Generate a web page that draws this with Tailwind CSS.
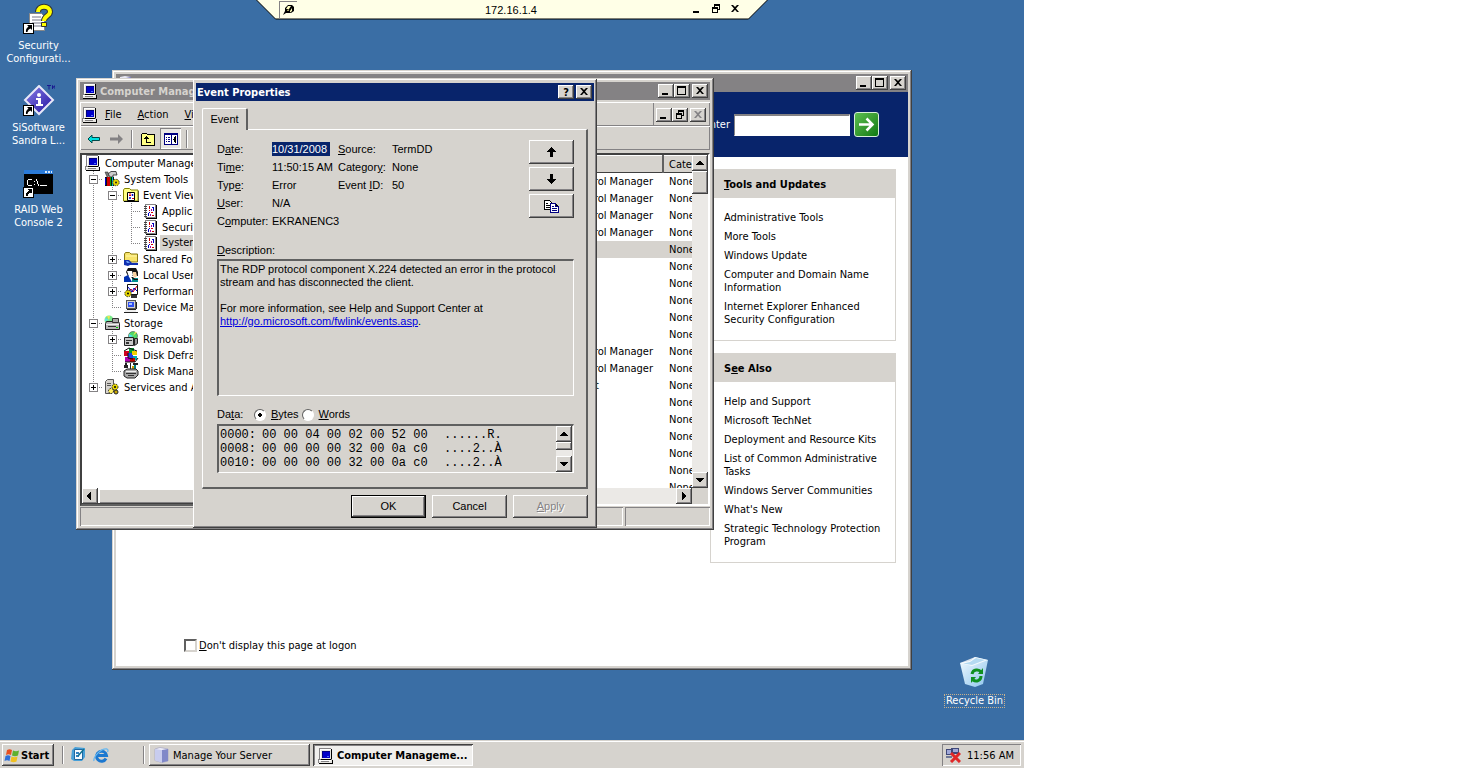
<!DOCTYPE html>
<html lang="en">
<head>
<meta charset="utf-8">
<meta name="viewport" content="width=device-width, initial-scale=1">
<title>172.16.1.4</title>
<script src="https://cdn.jsdelivr.net/npm/@tailwindcss/browser@4"></script>
</head>
<body class="min-h-screen bg-white font-['DejaVu_Sans_Condensed','DejaVu_Sans',sans-serif] text-[11px] leading-[13px] text-black">

<!-- Shared icons -->
<svg class="hidden" aria-hidden="true">
  <symbol id="pc" viewBox="0 0 16 16"><g shape-rendering="crispEdges"><path fill="#848284" d="M1 0h12v1H1zM1 1h1v10H1zM0 11h14v1H0zM0 12h1v3H0z"/><path fill="#e8e6e2" d="M2 1h11v10H2zM1 12h13v3H1z"/><path fill="#fff" d="M2 1h11v1H3v9H2zM1 12h12v1H1z"/><path fill="#000" d="M13 1h1v10h-1zM3 11h10v1H3zM1 15h14v1H1zM14 12h1v3h-1z"/><path fill="#0000c8" d="M4 3h8v7H4z"/><path fill="#000080" d="M4 3h8v1H4zM4 3h1v7H4z"/><path fill="#4a6aff" d="M9 8h2v1H9z"/><path fill="#848284" d="M3 13h8v1H3z"/></g></symbol>
  <symbol id="i-min" viewBox="0 0 12 10"><path d="M2 7h6v2H2z" shape-rendering="crispEdges"/></symbol>
  <symbol id="i-max" viewBox="0 0 12 10"><path fill-rule="evenodd" d="M1 0h9v9H1zM2 2v6h7V2z" shape-rendering="crispEdges"/></symbol>
  <symbol id="i-res" viewBox="0 0 12 10"><path fill-rule="evenodd" d="M4 0h6v6H8v3H2V3h2zM5 2v1h3v2h1V2zM3 5v3h4V5z" shape-rendering="crispEdges"/></symbol>
  <symbol id="i-x" viewBox="0 0 12 10"><path d="M2 1h2l2 2 2-2h2L7 4.500l3 3.500H8L6 5.800 4 8H2l3-3.500z"/></symbol>
  <symbol id="a-up" viewBox="0 0 8 8"><path d="M3 2h2v1h1v1h1v1h1v1H0V5h1V4h1V3h1z" shape-rendering="crispEdges"/></symbol>
  <symbol id="a-dn" viewBox="0 0 8 8"><path d="M0 2h8v1H7v1H6v1H5v1H3V5H2V4H1V3H0z" shape-rendering="crispEdges"/></symbol>
  <symbol id="a-lt" viewBox="0 0 8 8"><path d="M5 0v8H4V7H3V6H2V5H1V3h1V2h1V1h1V0z" shape-rendering="crispEdges"/></symbol>
  <symbol id="a-rt" viewBox="0 0 8 8"><path d="M2 0v8h1V7h1V6h1V5h1V3H5V2H4V1H3V0z" shape-rendering="crispEdges"/></symbol>
  <symbol id="shortcut" viewBox="0 0 11 11"><g shape-rendering="crispEdges"><path fill="#fff" d="M0 0h11v11H0z"/><path fill="none" stroke="#000" d="M.5 .5h10v10H.5z"/></g><path d="M4 2h5v5L7.500 5.500C5.500 6.500 4.500 7.500 4.500 9H3C2.500 7 3.500 5 5.500 3.500z"/></symbol>
  <symbol id="tools" viewBox="0 0 16 16"><path fill="#ccc" stroke="#222" stroke-width=".8" d="M4 3l3-2.500h5l1 3.500H9v2H6z"/><path fill="#777" stroke="#222" stroke-width=".5" d="M1 1h3l1 4-2 1z"/><path fill="#111" d="M1 6h9v9H1z"/><path fill="#d00000" d="M3 6h3v9H3z"/><path fill="#00c0c0" d="M8 6h1v9H8z"/><path fill="#0000d0" d="M1 7h1v7H1z"/><path fill="#00a000" d="M6 6h1v9H6z"/><circle cx="12" cy="11.500" r="3.200" fill="#e8d800" stroke="#333" stroke-dasharray="1.500 1"/><circle cx="12" cy="11.500" r="1" fill="#222"/></symbol>
  <symbol id="evt" viewBox="0 0 16 16"><path fill="#ffff84" stroke="#848200" d="M.5 14V3l1-1.500h5L8 3h7v11z"/><path d="M1 14.500h15V4" stroke="#000" fill="none"/><path fill="#fff" stroke="#000" d="M4.500 5.500h7v8h-7z"/><path stroke="#d00" d="M6 7h2M6 8.500h2"/><path stroke="#00c" stroke-width="1.500" d="M9.500 7v2M7 10v2"/><path stroke="#c00" d="M9 11.500h2"/></symbol>
  <symbol id="log" viewBox="0 0 16 16"><g shape-rendering="crispEdges"><path fill="#fff" stroke="#848284" d="M3.500 1.500h10v13h-10z"/><path stroke="#000" d="M14.500 2v13M4 15.500h11"/><path d="M2 3h3v1H2zM2 5h3v1H2zM2 7h3v1H2zM2 9h3v1H2zM2 11h3v1H2zM2 13h3v1H2z" fill="#444"/><path fill="#d00000" d="M7 3h1v3H7zM7 7h1v1H7zM9 9h2v1H9zM10 12h2v1h-2z"/><path fill="#0000c0" d="M10 4h2v1h-2zM11 5h1v3h-1zM6 10h1v3H6zM7 9h1v1H7z"/><path fill="#a000a0" d="M9 6h1v2H9zM8 11h1v2H8z"/></g></symbol>
  <symbol id="share" viewBox="0 0 16 16"><path fill="#f7e36b" stroke="#8a7a10" d="M1.500 11V3l1-1.500h4L8 3h6.500v8z"/><path fill="#fff6a8" d="M3 4.500h11v1H3z"/><path fill="#1030b0" d="M1 9h5l3 3h6v2H7l-2 1-4-1z"/><path fill="#6a9cf0" d="M3 10h2l2 2H4z"/></symbol>
  <symbol id="users" viewBox="0 0 16 16"><path fill="#111" d="M5 1h8l2 4v4H5L3 5z"/><path fill="#fff" d="M4 4h5l1 4-2 2H6z"/><path fill="#0030b0" d="M1 10l4-2 4 7H1z"/><path fill="#f7d0a0" d="M10 5h3l1 4-2 2-2-2z"/><path fill="#009090" d="M9 11h6v4H9z"/><path fill="#111" d="M8 10h2l2 2h3v1h-4z"/></symbol>
  <symbol id="perf" viewBox="0 0 16 16"><path fill="#fff" stroke="#111" d="M4.500 1.500h10v10h-10z"/><path fill="none" stroke="#d00" d="M5 9l3-3 2 3 4-6"/><path fill="none" stroke="#00c" d="M5 4l4 5 2-4 3 3"/><circle cx="5" cy="10.500" r="3.200" fill="#e8d800" stroke="#333" stroke-dasharray="1.500 1"/><circle cx="5" cy="10.500" r="1"/><path fill="#333" d="M8 12h6v3H8z"/></symbol>
  <symbol id="dev" viewBox="0 0 16 16"><g shape-rendering="crispEdges"><path fill="#d6d3ce" stroke="#555" d="M3.500 1.500h9v8h-9z"/><path fill="#3050f0" d="M5 3h6v5H5z"/><path fill="#a8c0ff" d="M6 4h3v2H6z"/><path fill="#eee" d="M2 11h11v2H2z"/><path fill="#222" d="M1 13h14v1H1zM13 3h1v7h-1zM4 10h9v1H4z"/></g></symbol>
  <symbol id="stor" viewBox="0 0 16 16"><circle cx="5" cy="5" r="4.500" fill="#78e888"/><path fill="#f0e850" d="M5 5L3 1h3z"/><path fill="#60e0f0" d="M5 5L1 3v3z"/><path fill="#b8b8b8" stroke="#222" d="M1.500 8.500l1-2h12l1 2v6h-14z"/><path fill="#eee" d="M2 9h13v1H2z"/><path fill="#aaa" stroke="#333" d="M8.500 3.500h6v4h-6z"/><path fill="#333" d="M4 11h8v1H4z"/><path fill="#0c0" d="M12 12h2v1h-2z"/></symbol>
  <symbol id="rem" viewBox="0 0 16 16"><circle cx="10" cy="5" r="4.500" fill="#50d868" stroke="#333" stroke-width=".5"/><path fill="#f0e850" d="M10 5l2-4h2z"/><path fill="#50e0e8" d="M10 5L6 3v4z"/><path fill="#c8c8c8" stroke="#222" d="M1.500 6.500h9v8h-9z"/><path fill="#333" d="M3 9h6v1H3zM3 11h3v2H3z"/><path fill="#999" stroke="#222" d="M11.500 7.500h3v5l-3 2z"/></symbol>
  <symbol id="frag" viewBox="0 0 16 16"><path fill="#d00020" d="M1 4h5v5H1z"/><path fill="#00a030" d="M6 1h5v5H6z"/><path fill="#2040e0" d="M5 6h5v5H5z"/><path fill="#f0d000" d="M9 4h5v4H9z"/><path fill="#b000b0" d="M2 10h5v5H2z"/><path fill="#00b0b0" d="M10 9h4v4h-4z"/><path fill="#c00000" d="M7 11h5v4H7z"/><path fill="none" stroke="#111" d="M1 4l5-3M6 1l8 3M2 15h10l3-4M5 6v5l5 1"/></symbol>
  <symbol id="dmgr" viewBox="0 0 16 16"><path fill="#222" d="M2 0h2v2h1v3H1V2h1zM7 0h1v6H7zM10 0h5v2h-5z"/><path stroke="#008080" stroke-width="2" d="M12 2v5"/><path fill="#d0a000" d="M9 3h2v3H9z"/><path fill="#a8a8a8" stroke="#222" d="M1 8l3-2h9l2 2v4l-3 3H4l-3-2z"/><path fill="#eee" d="M3 8h10v1H3z"/><path fill="#333" d="M3 10h10v1H3zM5 12h6v1H5z"/></symbol>
  <symbol id="svc" viewBox="0 0 16 16"><path fill="#d6d3ce" stroke="#555" d="M1.500 2.500l2-2h6v12l-2 2h-6z"/><path stroke="#555" d="M3 4.500h4M3 6.500h4"/><circle cx="11" cy="8" r="3" fill="#e8d800" stroke="#222" stroke-dasharray="1.500 1"/><circle cx="7" cy="12" r="2.500" fill="#fff060" stroke="#222" stroke-dasharray="1.500 1"/><circle cx="12" cy="13" r="2" fill="#c8a800" stroke="#222"/><circle cx="11" cy="8" r="1"/></symbol>
</svg>

<main class="relative flex h-screen min-h-[768px] w-full max-w-[1024px] flex-col overflow-hidden bg-[#3a6ea5]">

  <!-- Desktop shortcuts -->
  <nav class="flex w-[77px] flex-1 flex-col pt-[3px] text-center text-white" aria-label="Desktop">
    <a href="#" class="flex h-[82px] flex-col items-center gap-1">
      <svg class="size-8" viewBox="0 0 32 32"><path fill="#fff" stroke="#888" d="M6.500 10.500h12l3 3v14h-15z"/><path stroke="#778" d="M9 14h9M9 17h10M9 20h10M9 23h10"/><path fill="none" stroke="#333" stroke-width="6" d="M15 9c0-7 12-7 12 0 0 4-6 4-6 9"/><path fill="none" stroke="#ffff00" stroke-width="4" d="M15 9c0-7 12-7 12 0 0 4-6 4-6 9"/><path fill="#ffff00" stroke="#333" d="M18.500 19.500h5v4h-5z"/><use href="#shortcut" x="0" y="20" width="11" height="11"/></svg>
      <span>Security<br>Configurati...</span>
    </a>
    <a href="#" class="flex h-[82px] flex-col items-center gap-1">
      <svg class="size-8" viewBox="0 0 32 32"><defs><linearGradient id="dia" x1="0" y1="0" x2="1" y2="1"><stop offset="0" stop-color="#8a80e8"/><stop offset="1" stop-color="#2010a0"/></linearGradient></defs><path fill="url(#dia)" stroke="#e8e8f8" stroke-width="2" d="M16 1l14 14-14 14L2 15z"/><circle cx="16" cy="10" r="2" fill="#fff"/><path fill="#fff" d="M13 13h5v6h2v2h-7v-2h2v-4h-2z"/><path fill="none" stroke="#1a1a90" d="M24 .5h4M26 .5v4M29.500 4V.5l1.200 2L32 .5V4"/><use href="#shortcut" x="0" y="20" width="11" height="11"/></svg>
      <span>SiSoftware<br>Sandra L...</span>
    </a>
    <a href="#" class="flex h-[82px] flex-col items-center gap-1">
      <svg class="size-8" viewBox="0 0 32 32" shape-rendering="crispEdges"><path fill="#000" d="M1 3h29v24H1z"/><path fill="#2a7ad8" d="M1 3h29v4H1z"/><path fill="#d8e8f8" d="M22 4h2v2h-2zM25 4h2v2h-2zM28 4h1v2h-1z"/><path fill="#fff" d="M5 12h4v1H5zM4 13h1v5H4zM5 18h4v1H5zM11 14h1v1h-1zM11 17h1v1h-1zM13 12h1v2h-1zM14 14h1v3h-1zM15 17h1v2h-1zM17 18h7v1h-7z"/><use href="#shortcut" x="0" y="20" width="11" height="11"/></svg>
      <span>RAID Web<br>Console 2</span>
    </a>
  </nav>
  <a href="#" class="absolute right-[19px] bottom-[60px] flex flex-col items-center gap-[6px] text-white">
    <svg class="size-8" viewBox="0 0 32 32"><defs><linearGradient id="bin" x1="0" y1="0" x2="1" y2="1"><stop offset="0" stop-color="#f4fbff"/><stop offset="1" stop-color="#8cc4ec"/></linearGradient></defs><path fill="url(#bin)" d="M2 7l10-2 5-4 13 3-5 24-8 3-10-3z"/><path fill="#fff" opacity=".8" d="M2 7l12 3 16-6-13-3z"/><path fill="#b4daf2" d="M5 7.500l9 1.500 13-5-9-2-6 4z"/><path fill="none" stroke="#109020" stroke-width="3" d="M14 18c1-5 7-5 9-2M23 20c0 5-5 6-8 4"/><path fill="#109020" d="M20 18h5v-6zM18 21h-5v6z"/></svg>
    <span class="border border-dotted border-[#c8b08c] px-px leading-[12px]">Recycle Bin</span>
  </a>

  <!-- Manage Your Server -->
  <section aria-label="Manage Your Server" class="absolute top-[70px] left-[112px] flex h-[600px] w-[800px] flex-col bg-[#d6d3ce] p-1 shadow-[inset_-1px_-1px_0_#404040,inset_1px_1px_0_#d6d3ce,inset_-2px_-2px_0_#848284,inset_2px_2px_0_#fff]">
    <header class="flex h-[18px] shrink-0 items-center justify-end bg-[#848284] px-[2px]">
      <svg class="mr-auto size-4" viewBox="0 0 16 16"><path fill="#e8e8f4" d="M2 2l5-1 6 1v12l-6 1-5-2z"/><path fill="#7070c0" d="M8 3l5-1v12l-5 1z"/></svg>
      <button aria-label="Minimize" class="grid h-[14px] w-4 place-items-center bg-[#d6d3ce] shadow-[inset_-1px_-1px_0_#404040,inset_1px_1px_0_#fff,inset_-2px_-2px_0_#848284]"><svg class="h-[10px] w-3"><use href="#i-min"/></svg></button>
      <button aria-label="Maximize" class="mr-[2px] grid h-[14px] w-4 place-items-center bg-[#d6d3ce] shadow-[inset_-1px_-1px_0_#404040,inset_1px_1px_0_#fff,inset_-2px_-2px_0_#848284]"><svg class="h-[10px] w-3"><use href="#i-max"/></svg></button>
      <button aria-label="Close" class="grid h-[14px] w-4 place-items-center bg-[#d6d3ce] shadow-[inset_-1px_-1px_0_#404040,inset_1px_1px_0_#fff,inset_-2px_-2px_0_#848284]"><svg class="h-[10px] w-3"><use href="#i-x"/></svg></button>
    </header>
    <form class="flex h-[65px] shrink-0 items-center justify-end gap-1 bg-[#08246b] pr-[29px] text-white">
      <label for="search">Search Help and Support Center</label>
      <input id="search" type="text" class="h-[22px] w-[116px] border border-t-2 border-[#848284] border-r-white border-b-white bg-white px-1 text-black">
      <button type="button" aria-label="Go" class="grid size-[25px] place-items-center rounded-[3px] border border-[#d8f0d8] bg-linear-to-br from-[#5cc050] to-[#0a7a10]"><svg class="size-[17px]" viewBox="0 0 17 17"><path fill="none" stroke="#fff" stroke-width="2.500" d="M1 8.500h13M8.500 2.500l6 6-6 6"/></svg></button>
    </form>
    <div class="flex flex-1 flex-col bg-white">
      <div class="flex flex-1 items-start justify-end pt-3 pr-3">
        <aside class="flex w-[186px] flex-col gap-3">
          <section class="border border-[#d6d3ce]">
            <h2 class="bg-[#d6d3ce] px-[13px] pt-2 pb-[7px] font-bold"><u>T</u>ools and Updates</h2>
            <ul class="flex flex-col gap-[6px] px-[13px] pt-[13px] pb-[14px]">
              <li><a href="#">Administrative Tools</a></li>
              <li><a href="#">More Tools</a></li>
              <li><a href="#">Windows Update</a></li>
              <li><a href="#">Computer and Domain Name<br>Information</a></li>
              <li><a href="#">Internet Explorer Enhanced<br>Security Configuration</a></li>
            </ul>
          </section>
          <section class="border border-[#d6d3ce]">
            <h2 class="bg-[#d6d3ce] px-[13px] pt-2 pb-[7px] font-bold">S<u>e</u>e Also</h2>
            <ul class="flex flex-col gap-[6px] px-[13px] pt-[13px] pb-[14px]">
              <li><a href="#">Help and Support</a></li>
              <li><a href="#">Microsoft TechNet</a></li>
              <li><a href="#">Deployment and Resource Kits</a></li>
              <li><a href="#">List of Common Administrative<br>Tasks</a></li>
              <li><a href="#">Windows Server Communities</a></li>
              <li><a href="#">What's New</a></li>
              <li><a href="#">Strategic Technology Protection<br>Program</a></li>
            </ul>
          </section>
        </aside>
      </div>
      <label class="flex items-center gap-[2px] pb-[14px] pl-[68px]"><input type="checkbox" class="size-[13px] appearance-none border-2 border-[#606060] border-r-[#d6d3ce] border-b-[#d6d3ce] bg-white"><span><u>D</u>on't display this page at logon</span></label>
    </div>
  </section>

  <!-- Computer Management -->
  <section aria-label="Computer Management" class="absolute top-[78px] left-[76px] flex h-[452px] w-[638px] flex-col bg-[#d6d3ce] p-1 shadow-[inset_-1px_-1px_0_#404040,inset_1px_1px_0_#d6d3ce,inset_-2px_-2px_0_#848284,inset_2px_2px_0_#fff]">
    <header class="flex h-[18px] shrink-0 items-center bg-[#848284] px-[2px]">
      <svg class="size-4"><use href="#pc"/></svg>
      <h1 class="ml-[2px] flex-1 font-bold text-[#d6d3ce]">Computer Management</h1>
      <button aria-label="Minimize" class="grid h-[14px] w-4 place-items-center bg-[#d6d3ce] shadow-[inset_-1px_-1px_0_#404040,inset_1px_1px_0_#fff,inset_-2px_-2px_0_#848284]"><svg class="h-[10px] w-3"><use href="#i-min"/></svg></button>
      <button aria-label="Maximize" class="mr-[2px] grid h-[14px] w-4 place-items-center bg-[#d6d3ce] shadow-[inset_-1px_-1px_0_#404040,inset_1px_1px_0_#fff,inset_-2px_-2px_0_#848284]"><svg class="h-[10px] w-3"><use href="#i-max"/></svg></button>
      <button aria-label="Close" class="grid h-[14px] w-4 place-items-center bg-[#d6d3ce] shadow-[inset_-1px_-1px_0_#404040,inset_1px_1px_0_#fff,inset_-2px_-2px_0_#848284]"><svg class="h-[10px] w-3"><use href="#i-x"/></svg></button>
    </header>
    <div class="mt-[2px] flex h-6 shrink-0 items-center border-t border-l border-white shadow-[inset_-1px_-1px_0_#848284]">
      <svg class="ml-px size-4"><use href="#pc"/></svg>
      <div class="flex flex-1 gap-4 pl-[7px]"><button><u>F</u>ile</button><button><u>A</u>ction</button><button><u>V</u>iew</button></div>
      <div class="flex h-full items-center border-l border-[#848284] pr-1 pl-[2px]">
        <button aria-label="Minimize document" class="grid h-[14px] w-4 place-items-center bg-[#d6d3ce] shadow-[inset_-1px_-1px_0_#404040,inset_1px_1px_0_#fff,inset_-2px_-2px_0_#848284]"><svg class="h-[10px] w-3"><use href="#i-min"/></svg></button>
        <button aria-label="Restore document" class="mr-[2px] grid h-[14px] w-4 place-items-center bg-[#d6d3ce] shadow-[inset_-1px_-1px_0_#404040,inset_1px_1px_0_#fff,inset_-2px_-2px_0_#848284]"><svg class="h-[10px] w-3"><use href="#i-res"/></svg></button>
        <button disabled aria-label="Close document" class="grid h-[14px] w-4 place-items-center bg-[#d6d3ce] fill-[#848284] shadow-[inset_-1px_-1px_0_#404040,inset_1px_1px_0_#fff,inset_-2px_-2px_0_#848284]"><svg class="h-[10px] w-3"><use href="#i-x"/></svg></button>
      </div>
    </div>
    <div class="flex h-6 shrink-0 items-center border-t border-l border-white pl-[6px] shadow-[inset_-1px_-1px_0_#848284]">
      <button aria-label="Back"><svg class="h-[10px] w-[13px]" viewBox="0 0 13 10"><path fill="#00e0e0" stroke="#004a4a" d="M1 5l4-4v2.500h7.500v3H5V9z"/></svg></button>
      <button aria-label="Forward" class="ml-[10px]"><svg class="h-[10px] w-[13px]" viewBox="0 0 13 10"><path fill="#848284" d="M13 5L8 0v3.500H0v3h8V10z"/></svg></button>
      <span class="ml-2 h-[18px] w-[2px] border-l border-[#848284] bg-white"></span>
      <button aria-label="Up one level" class="ml-[7px]"><svg class="h-[14px] w-4" viewBox="0 0 16 14" shape-rendering="crispEdges"><path fill="#ffff84" stroke="#000" d="M1.500 13.500v-11l1-1h4l1 1h7v11z"/><path d="M6 4h1v1h1v1h1v1H7v3h4v1H6V7H4V6h1V5h1z"/></svg></button>
      <button aria-label="Show tree" class="ml-1 grid size-[21px] place-items-center bg-[#e8e6e2] shadow-[inset_1px_1px_0_#848284,inset_-1px_-1px_0_#fff]"><svg class="h-3 w-[14px]" viewBox="0 0 14 12" shape-rendering="crispEdges"><path fill="#fff" stroke="#000080" d="M.5 .5h13v11H.5z"/><path fill="#000080" d="M0 0h14v2H0zM7 2h1v9H7zM2 4h1v1H2zM4 4h2v1H4zM2 6h1v1H2zM4 6h2v1H4zM2 8h1v1H2zM4 8h2v1H4z"/><path d="M12 3v7h-1V9h-1V7H9V6h1V4h1V3z"/></svg></button>
      <span class="ml-[5px] h-[18px] w-[2px] border-l border-[#848284] bg-white"></span>
    </div>
    <div class="mt-[3px] flex min-h-0 flex-1 gap-1">
      <div class="flex w-[220px] shrink-0 flex-col overflow-hidden border-2 border-[#404040] border-r-white border-b-[#606060] bg-white">
        <ul id="tree" class="min-h-0 flex-1 overflow-hidden whitespace-nowrap pl-[2px]"></ul>
        <div class="flex h-4 shrink-0 bg-[#e9e7e3]">
          <button aria-label="Scroll left" class="grid size-4 place-items-center bg-[#d6d3ce] shadow-[inset_-1px_-1px_0_#404040,inset_1px_1px_0_#fff,inset_-2px_-2px_0_#848284]"><svg class="size-2"><use href="#a-lt"/></svg></button>
          <span class="w-[150px] bg-[#d6d3ce] shadow-[inset_-1px_-1px_0_#404040,inset_2px_2px_0_#fff,inset_-2px_-2px_0_#848284]"></span>
        </div>
      </div>
      <div class="flex min-w-0 flex-1 border-2 border-[#404040] border-r-white border-b-white bg-white">
        <div class="flex min-w-0 flex-1 flex-col">
          <div class="min-h-0 flex-1 overflow-hidden">
            <table class="w-full table-fixed border-collapse whitespace-nowrap">
              <thead><tr class="h-[18px] bg-[#d6d3ce] text-left shadow-[inset_0_-1px_0_#404040,inset_0_1px_0_#fff]"><th class="p-0"></th><th class="w-[29px] overflow-hidden border-l-2 border-[#606060] p-0 pl-[5px] font-normal">Category</th></tr></thead>
              <tbody id="events"></tbody>
            </table>
          </div>
          <div class="flex h-4 shrink-0 justify-end bg-[#ebe9e6]">
            <button aria-label="Scroll right" class="grid size-4 place-items-center bg-[#d6d3ce] shadow-[inset_-1px_-1px_0_#404040,inset_1px_1px_0_#fff,inset_-2px_-2px_0_#848284]"><svg class="size-2"><use href="#a-rt"/></svg></button>
          </div>
        </div>
        <div class="flex w-4 flex-col bg-[#ebe9e6]">
          <button aria-label="Scroll up" class="grid size-4 place-items-center bg-[#d6d3ce] shadow-[inset_-1px_-1px_0_#404040,inset_1px_1px_0_#fff,inset_-2px_-2px_0_#848284]"><svg class="size-2"><use href="#a-up"/></svg></button>
          <span class="mb-auto h-[23px] bg-[#d6d3ce] shadow-[inset_-1px_-1px_0_#404040,inset_1px_1px_0_#fff,inset_-2px_-2px_0_#848284]"></span>
          <button aria-label="Scroll down" class="grid size-4 place-items-center bg-[#d6d3ce] shadow-[inset_-1px_-1px_0_#404040,inset_1px_1px_0_#fff,inset_-2px_-2px_0_#848284]"><svg class="size-2"><use href="#a-dn"/></svg></button>
          <span class="h-4 bg-[#d6d3ce]"></span>
        </div>
      </div>
    </div>
    <footer class="mt-px flex h-[19px] shrink-0 gap-[2px]">
      <span class="flex-1 shadow-[inset_1px_1px_0_#848284,inset_-1px_-1px_0_#fff]"></span>
      <span class="w-[85px] shadow-[inset_1px_1px_0_#848284,inset_-1px_-1px_0_#fff]"></span>
    </footer>
  </section>

  <!-- Event Properties -->
  <section role="dialog" aria-label="Event Properties" class="absolute top-[79px] left-[193px] flex h-[449px] w-[404px] flex-col bg-[#d6d3ce] p-[3px] pt-1 font-['Liberation_Sans',sans-serif] shadow-[inset_-1px_-1px_0_#404040,inset_1px_1px_0_#fff,inset_-2px_-2px_0_#848284]">
    <header class="flex h-[18px] shrink-0 items-center gap-[2px] bg-[#08246b] pr-[2px] pl-px font-['DejaVu_Sans_Condensed','DejaVu_Sans',sans-serif]">
      <h1 class="flex-1 font-bold text-white">Event Properties</h1>
      <button aria-label="Help" class="grid h-[14px] w-4 place-items-center bg-[#d6d3ce] font-bold shadow-[inset_-1px_-1px_0_#404040,inset_1px_1px_0_#fff,inset_-2px_-2px_0_#848284]">?</button>
      <button aria-label="Close" class="grid h-[14px] w-4 place-items-center bg-[#d6d3ce] shadow-[inset_-1px_-1px_0_#404040,inset_1px_1px_0_#fff,inset_-2px_-2px_0_#848284]"><svg class="h-[10px] w-3"><use href="#i-x"/></svg></button>
    </header>
    <div class="flex flex-1 flex-col px-[6px] pt-[7px] pb-[7px]">
      <div role="tablist" class="z-10 -mb-px flex"><button role="tab" class="h-[22px] w-[46px] rounded-t-[2px] border-t border-r-2 border-l border-[#606060] border-t-white border-l-white bg-[#d6d3ce]">Event</button></div>
      <div class="flex flex-1 flex-col border border-r-2 border-b-2 border-[#606060] border-t-white border-l-white pt-[10px] pr-3 pl-[14px]">
        <div class="flex justify-between">
          <dl class="grid grid-cols-[55px_66px_54px_60px] leading-[18px] whitespace-nowrap">
            <dt>D<u>a</u>te:</dt><dd><span class="bg-[#08246b] py-px pr-[3px] text-white">10/31/2008</span></dd><dt><u>S</u>ource:</dt><dd>TermDD</dd>
            <dt>Ti<u>m</u>e:</dt><dd>11:50:15 AM</dd><dt>Categor<u>y</u>:</dt><dd>None</dd>
            <dt>Typ<u>e</u>:</dt><dd>Error</dd><dt>Event <u>I</u>D:</dt><dd>50</dd>
            <dt><u>U</u>ser:</dt><dd class="col-span-3">N/A</dd>
            <dt>C<u>o</u>mputer:</dt><dd class="col-span-3">EKRANENC3</dd>
          </dl>
          <div class="flex flex-col gap-[3px]">
            <button aria-label="Previous event" class="grid h-6 w-[45px] place-items-center shadow-[inset_-1px_-1px_0_#404040,inset_1px_1px_0_#fff,inset_-2px_-2px_0_#848284]"><svg class="h-[10px] w-[9px]" viewBox="0 0 9 10" shape-rendering="crispEdges"><path d="M4 0h1v1h1v1h1v1h1v1h1v1H6v5H3V5H0V4h1V3h1V2h1V1h1z"/></svg></button>
            <button aria-label="Next event" class="grid h-6 w-[45px] place-items-center shadow-[inset_-1px_-1px_0_#404040,inset_1px_1px_0_#fff,inset_-2px_-2px_0_#848284]"><svg class="h-[10px] w-[9px]" viewBox="0 0 9 10" shape-rendering="crispEdges"><path d="M4 10h1V9h1V8h1V7h1V6h1V5H6V0H3v5H0v1h1v1h1v1h1v1h1z"/></svg></button>
            <button aria-label="Copy" class="grid h-6 w-[45px] place-items-center shadow-[inset_-1px_-1px_0_#404040,inset_1px_1px_0_#fff,inset_-2px_-2px_0_#848284]"><svg class="h-[13px] w-4" viewBox="0 0 16 13" shape-rendering="crispEdges"><path fill="#fff" stroke="#000" d="M.5 .5h5l2 2v7h-7z"/><path stroke="#000" d="M2 3.500h2M2 5.500h4M2 7.500h4"/><path fill="#fff" stroke="#000080" d="M6.500 3.500h5l3 3v6h-8z"/><path stroke="#000080" d="M11.500 3v3.500H15M8 6.500h2M8 8.500h5M8 10.500h5"/></svg></button>
          </div>
        </div>
        <h2 class="mt-[14px] mb-[2px]"><u>D</u>escription:</h2>
        <div class="h-[137px] border border-t-2 border-l-2 border-[#606060] border-r-white border-b-white pt-[2px] pl-px">
          <p>The RDP protocol component X.224 detected an error in the protocol<br>stream and has disconnected the client.</p>
          <p class="mt-[13px]">For more information, see Help and Support Center at<br><a href="http://go.microsoft.com/fwlink/events.asp" class="text-[#0000e0] underline">http://go.microsoft.com/fwlink/events.asp</a>.</p>
        </div>
        <fieldset class="mt-[12px] mb-[3px] flex items-center">
          <legend class="float-left w-[37px]">Da<u>t</u>a:</legend>
          <label class="flex items-center gap-[5px]"><input type="radio" name="fmt" checked class="size-3 appearance-none rounded-full border border-[#606060] border-r-white border-b-white bg-white checked:bg-[radial-gradient(#000_2px,#fff_2px)]"><span><u>B</u>ytes</span></label>
          <label class="ml-[3px] flex items-center gap-[5px]"><input type="radio" name="fmt" class="size-3 appearance-none rounded-full border border-[#606060] border-r-white border-b-white bg-white checked:bg-[radial-gradient(#000_2px,#fff_2px)]"><span><u>W</u>ords</span></label>
        </fieldset>
        <div class="flex h-[49px] justify-between border border-t-2 border-l-2 border-[#606060] border-r-white border-b-white pr-px">
          <table class="ml-px h-[42px] w-[290px] table-fixed border-collapse self-center font-['Liberation_Mono',monospace] text-[12px] leading-[14px] whitespace-nowrap">
            <tbody>
              <tr><td class="w-[42px] p-0">0000:</td><td class="w-[182px] p-0">00 00 04 00 02 00 52 00</td><td class="p-0">......R.</td></tr>
              <tr><td class="p-0">0008:</td><td class="p-0">00 00 00 00 32 00 0a c0</td><td class="p-0">....2..À</td></tr>
              <tr><td class="p-0">0010:</td><td class="p-0">00 00 00 00 32 00 0a c0</td><td class="p-0">....2..À</td></tr>
            </tbody>
          </table>
          <div class="flex w-4 flex-col bg-[#ebe9e6]">
            <button aria-label="Scroll data up" class="grid size-4 place-items-center bg-[#d6d3ce] shadow-[inset_-1px_-1px_0_#404040,inset_1px_1px_0_#fff,inset_-2px_-2px_0_#848284]"><svg class="size-2"><use href="#a-up"/></svg></button>
            <span class="mb-auto h-2 bg-[#d6d3ce] shadow-[inset_-1px_-1px_0_#404040,inset_1px_1px_0_#fff,inset_-2px_-2px_0_#848284]"></span>
            <button aria-label="Scroll data down" class="grid size-4 place-items-center bg-[#d6d3ce] shadow-[inset_-1px_-1px_0_#404040,inset_1px_1px_0_#fff,inset_-2px_-2px_0_#848284]"><svg class="size-2"><use href="#a-dn"/></svg></button>
          </div>
        </div>
      </div>
      <div class="mt-[6px] flex justify-end gap-[6px]">
        <button class="h-[23px] w-[75px] border border-black shadow-[inset_-1px_-1px_0_#404040,inset_1px_1px_0_#fff,inset_-2px_-2px_0_#848284]">OK</button>
        <button class="h-[23px] w-[75px] shadow-[inset_-1px_-1px_0_#404040,inset_1px_1px_0_#fff,inset_-2px_-2px_0_#848284]">Cancel</button>
        <button disabled class="h-[23px] w-[75px] text-[#848284] shadow-[inset_-1px_-1px_0_#404040,inset_1px_1px_0_#fff,inset_-2px_-2px_0_#848284] [text-shadow:1px_1px_0_#fff]"><u>A</u>pply</button>
      </div>
    </div>
  </section>

  <!-- Remote connection bar -->
  <div class="absolute top-0 left-1/2 h-5 w-[512px] -translate-x-1/2">
    <svg class="absolute inset-0 h-5 w-full" viewBox="0 0 512 20"><path fill="#ffffe7" stroke="#000" d="M0 -.5L19.500 19h473L512 -.5z"/></svg>
    <div class="relative flex h-[18px] items-center pr-[27px] pl-[23px] font-['Liberation_Sans',sans-serif]">
      <button aria-label="Pin" class="grid h-[17px] w-[18px] place-items-center border-t border-l border-[#848284]"><svg class="size-[11px]" viewBox="0 0 11 11"><path d="M0 11l2-4V4l3-3h4l2 2v4L8 9H3z"/><path fill="#ffffc0" d="M3 5l2-3h3L6 5zM7 7l2-3v3L7 8.500z"/><path fill="#a0a060" d="M4 6l2-1v2H4z"/></svg></button>
      <span class="flex-1 pt-[2px] pl-[34px] text-center">172.16.1.4</span>
      <div class="flex gap-[7px]">
        <button aria-label="Minimize session"><svg class="h-[10px] w-3"><use href="#i-min"/></svg></button>
        <button aria-label="Restore session"><svg class="h-[10px] w-3"><use href="#i-res"/></svg></button>
        <button aria-label="Close session"><svg class="h-[10px] w-3"><use href="#i-x"/></svg></button>
      </div>
    </div>
  </div>

  <!-- Taskbar -->
  <footer class="flex h-7 shrink-0 items-center border-t border-[#d6d3ce] bg-[#d6d3ce] pt-px pr-[3px] pl-[2px] shadow-[inset_0_1px_0_#fff]">
    <button class="flex h-[22px] w-[52px] items-center gap-px pl-[2px] font-bold shadow-[inset_-1px_-1px_0_#404040,inset_1px_1px_0_#fff,inset_-2px_-2px_0_#848284]"><svg class="h-[15px] w-4 shrink-0" viewBox="0 0 16 15"><path fill="#e85020" d="M3 2c2-1 3-1 5 0L7 7C5 6 4 6 2 7z"/><path fill="#60b030" d="M9 2.500c2 1 4 1 6 0L14 7.500c-2 1-4 1-6 0z"/><path fill="#3070d8" d="M1.500 8c2-1 3-1 5 0l-1 5c-2-1-3-1-5 0z"/><path fill="#f0c020" d="M7.500 8.500c2 1 4 1 6 0l-1 5c-2 1-4 1-6 0z"/></svg>Start</button>
    <span class="ml-2 h-[18px] w-[2px] border-l border-[#848284] bg-white"></span>
    <button aria-label="Show Desktop" class="ml-[6px]"><svg class="size-4" viewBox="0 0 16 16"><path fill="#48a0d8" d="M2 3l3-3 10 1v9l-3 4H4l-3-2z"/><path fill="#f4faff" stroke="#2068a0" d="M4.500 2.500h8v10h-8z"/><path fill="#3080c0" d="M6 5h3v2H6zM6 8h3v2H6z"/><path stroke="#107090" stroke-width="1.500" d="M8 9l6-7"/></svg></button>
    <button aria-label="Internet Explorer" class="ml-[7px]"><svg class="size-4" viewBox="0 0 16 16"><path fill="none" stroke="#1c78d0" stroke-width="3" d="M13 11.500a5 5 0 1 1 .5-3H5"/><path fill="none" stroke="#68b8f0" stroke-width="1.300" d="M1 14c-1-4 7-13 13-12 1.500 .5 1 2 .5 3"/></svg></button>
    <span class="ml-[34px] h-[18px] w-[2px] border-l border-[#848284] bg-white"></span>
    <button class="ml-[4px] flex h-[22px] w-[161px] items-center gap-[3px] pl-[5px] shadow-[inset_-1px_-1px_0_#404040,inset_1px_1px_0_#fff,inset_-2px_-2px_0_#848284]"><svg class="size-4" viewBox="0 0 16 16"><path fill="#f0f0fa" stroke="#9898b8" stroke-width=".6" d="M1 2l5-1.500 8 1.500v12l-6 1.500-7-2z"/><path fill="#8088c8" d="M8 3l6-1v12l-6 1.500z"/><path fill="#c8ccee" d="M1 2l7 1v12.500l-7-2z"/></svg>Manage Your Server</button>
    <button aria-pressed="true" class="ml-[3px] flex h-[22px] w-[160px] items-center gap-[3px] bg-[#f0efed] pt-px pl-[5px] font-bold shadow-[inset_1px_1px_0_#404040,inset_-1px_-1px_0_#fff,inset_2px_2px_0_#848284]"><svg class="size-4 shrink-0"><use href="#pc"/></svg>Computer Manageme...</button>
    <div class="ml-auto flex h-[22px] items-center gap-[6px] pr-[7px] pl-[3px] shadow-[inset_1px_1px_0_#848284,inset_-1px_-1px_0_#fff]"><svg class="size-4" viewBox="0 0 16 16"><path fill="#404878" d="M1 2h7v6H1zM6 1h8v6H6z"/><path fill="#a0a8d8" d="M2 3h4v4H2zM8 2h5v3H8z"/><path fill="#707898" d="M1 9h6v2H1z"/><path stroke="#e02828" stroke-width="3" d="M6 6l9 9M15 6l-9 9"/></svg><time>11:56 AM</time></div>
  </footer>
</main>

<script>
  // Each row: guide cells, icon, label. T/L = branch, | = line, + and - = expander (lower-case l: last one)
  const rows = [
    ['', 'pc', 'Computer Management (Local)'],
    ['-', 'tools', 'System Tools'],
    ['|-', 'evt', 'Event Viewer'],
    ['||T', 'log', 'Application'],
    ['||T', 'log', 'Security'],
    ['||L', 'log', 'System', true],
    ['|+', 'share', 'Shared Folders'],
    ['|+', 'users', 'Local Users and Groups'],
    ['|+', 'perf', 'Performance Logs and Alerts'],
    ['|L', 'dev', 'Device Manager'],
    ['-', 'stor', 'Storage'],
    ['|+', 'rem', 'Removable Storage'],
    ['|T', 'frag', 'Disk Defragmenter'],
    ['|L', 'dmgr', 'Disk Management'],
    ['l', 'svc', 'Services and Applications'],
  ];
  const cell = c => {
    const box = '+-l'.includes(c);
    const end = c === 'L' || c === 'l' ? 8 : 16;
    let s = `<path stroke="#848284" stroke-dasharray="1 1" d="M9.500 0V${end}"/>`;
    if (c !== '|') s += '<path stroke="#848284" stroke-dasharray="1 1" d="M9 8.500H19"/>';
    if (box) s += '<path fill="#fff" stroke="#848284" d="M5.500 4.500h8v8h-8z"/><path stroke="#000" d="M7 8.500h5"/>';
    if (c === '+' || c === 'l') s += '<path stroke="#000" d="M9.500 6v5"/>';
    return `<svg class="h-4 w-[19px] shrink-0" viewBox="0 0 19 16" fill="none" shape-rendering="crispEdges">${s}</svg>`;
  };
  document.getElementById('tree').innerHTML = rows.map(([g, icon, text, sel]) =>
    `<li class="flex h-4 items-center">${[...g].map(cell).join('')}<svg class="ml-px size-4 shrink-0"><use href="#${icon}"/></svg><span class="${sel ? 'ml-[2px] bg-[#d6d3ce] px-[2px] leading-4' : 'ml-1'}">${text}</span></li>`).join('');

  const scm = 'Service Control Manager';
  const sources = [scm, scm, scm, scm, '', '', '', '', '', '', scm, scm, 'Print', '', '', '', '', '', ''];
  document.getElementById('events').innerHTML = sources.map((s, i) =>
    `<tr class="h-[17px] ${i === 4 ? 'bg-[#d6d3ce]' : ''}"><td class="p-0 text-right ${s === scm ? 'pr-[10px]' : 'pr-[64px]'}">${s}</td><td class="overflow-hidden p-0 pl-[6px]">None</td></tr>`).join('');
</script>
</body>
</html>
